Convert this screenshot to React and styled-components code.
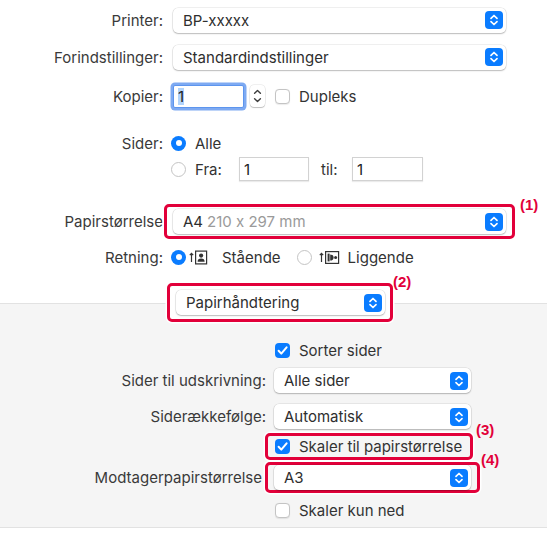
import styled, { createGlobalStyle } from "styled-components";

const GlobalStyle = createGlobalStyle`
  body {
    margin: 0;
    background: #ffffff;
    font-family: Inter, "Liberation Sans", sans-serif;
    font-size: 15px;
    font-feature-settings: "calt" 0;
    color: #333333;
  }
`;

const Page = styled.div`
  width: 547px;
`;

const TopSection = styled.section`
  padding: 6px 0 34px;
  background: #ffffff;
`;

const LowerSection = styled.section`
  background: #f5f5f5;
  border-top: 1px solid #e2e2e2;
  border-bottom: 1px solid #e2e2e2;
  padding-bottom: 7px;
`;

const FormRow = styled.div`
  display: grid;
  grid-template-columns: ${({ $col }) => $col}px 1fr;
  column-gap: ${({ $gap }) => $gap}px;
  align-items: center;
  height: ${({ $h }) => $h}px;
  margin-top: ${({ $mt }) => $mt || 0}px;
`;

const Label = styled.div`
  text-align: right;
  white-space: nowrap;
  color: #3a3a3a;
  padding-right: ${({ $pr }) => $pr || 0}px;
`;

const Controls = styled.div`
  display: flex;
  align-items: center;
`;

const Popup = styled.div`
  display: flex;
  align-items: center;
  justify-content: space-between;
  box-sizing: border-box;
  width: ${({ $w }) => $w}px;
  height: 25px;
  padding: 0 3px 0 10px;
  background: #ffffff;
  border-radius: 5px;
  box-shadow: 0 0 0 0.5px rgba(0, 0, 0, 0.12), 0 1px 1.5px rgba(0, 0, 0, 0.22);
  color: #2e2e2e;
  white-space: nowrap;
`;

const Dim = styled.span`
  color: #9a9a9a;
  margin-left: 4px;
`;

const ArrowBox = styled.span`
  display: flex;
  align-items: center;
  justify-content: center;
  width: 18px;
  height: 18px;
  border-radius: 4px;
  background: #0a7cff;
`;

const Callout = styled.div`
  position: relative;
  box-sizing: border-box;
  display: flex;
  align-items: center;
  width: ${({ $w }) => $w}px;
  height: ${({ $h }) => $h}px;
  margin-left: ${({ $ml }) => $ml}px;
  margin-top: ${({ $mt }) => $mt || 0}px;
  padding-left: ${({ $pl }) => $pl}px;
  border: 3px solid #e2003a;
  border-radius: 5px;
  background: ${({ $bg }) => $bg || "transparent"};
  box-shadow: 0 0 0 1.5px #ffffff;
`;

const CalloutTag = styled.span`
  position: absolute;
  left: calc(100% + ${({ $x }) => $x}px);
  top: ${({ $y }) => $y}px;
  font-family: "Liberation Sans", Arial, sans-serif;
  font-weight: 700;
  font-size: 15px;
  line-height: 16px;
  color: #e2003a;
  white-space: nowrap;
`;

const NumberField = styled.div`
  display: flex;
  align-items: center;
  box-sizing: border-box;
  width: ${({ $w }) => $w}px;
  height: ${({ $h }) => $h}px;
  padding-left: 4px;
  background: #ffffff;
  border: 1px solid ${({ $focus }) => ($focus ? "#5d95ee" : "#d2d2d2")};
  box-shadow: ${({ $focus }) =>
    $focus ? "0 0 0 2.5px #7eaaf2" : "0 1px 1px rgba(0, 0, 0, 0.08)"};
  border-radius: ${({ $focus }) => ($focus ? "2px" : "0")};
  color: #222222;
`;

const Selected = styled.span`
  background: #b2d4fb;
  line-height: 17px;
`;

const Stepper = styled.span`
  display: flex;
  margin-left: 6px;
  width: 15px;
  height: 22px;
  border-radius: 4px;
  background: #ffffff;
  box-shadow: 0 0 0 0.5px rgba(0, 0, 0, 0.12), 0 1px 1px rgba(0, 0, 0, 0.2);
`;

const Check = styled.span`
  display: flex;
  align-items: center;
  justify-content: center;
  box-sizing: border-box;
  flex-shrink: 0;
  width: 15px;
  height: 15px;
  margin-left: ${({ $ml }) => $ml || 0}px;
  border-radius: 4px;
  background: ${({ $on }) => ($on ? "#0a7cff" : "#ffffff")};
  border: ${({ $on }) => ($on ? "none" : "1px solid #c4c4c4")};
  box-shadow: ${({ $on }) => ($on ? "none" : "0 0.5px 1px rgba(0,0,0,0.08)")};
`;

const Radio = styled.span`
  display: flex;
  align-items: center;
  justify-content: center;
  box-sizing: border-box;
  flex-shrink: 0;
  width: 15px;
  height: 15px;
  margin-left: ${({ $ml }) => $ml || 0}px;
  border-radius: 50%;
  background: ${({ $on }) => ($on ? "#0a7cff" : "#ffffff")};
  border: ${({ $on }) => ($on ? "none" : "1px solid #c4c4c4")};

  &::after {
    content: "";
    display: ${({ $on }) => ($on ? "block" : "none")};
    width: 6px;
    height: 6px;
    border-radius: 50%;
    background: #ffffff;
  }
`;

const OptText = styled.span`
  margin-left: ${({ $ml }) => $ml}px;
  width: ${({ $w }) => ($w ? `${$w}px` : "auto")};
  white-space: nowrap;
  color: #333333;
`;

const Icon = styled.svg`
  margin-left: ${({ $ml }) => $ml}px;
  flex-shrink: 0;
`;

const HandlingWrap = styled.div`
  padding-left: 167px;
`;

const Arrows = () => (
  <ArrowBox>
    <svg width="18" height="18" viewBox="0 0 18 18">
      <path
        d="M6 7.3 L9 4.5 L12 7.3 M6 10.7 L9 13.5 L12 10.7"
        fill="none"
        stroke="#ffffff"
        strokeWidth="1.7"
        strokeLinecap="round"
        strokeLinejoin="round"
      />
    </svg>
  </ArrowBox>
);

const Select = ({ w, children }) => (
  <Popup $w={w}>
    <span>{children}</span>
    <Arrows />
  </Popup>
);

const Tick = () => (
  <svg width="15" height="15" viewBox="0 0 15 15">
    <path
      d="M3.6 7.8 L6.3 10.6 L11.6 4.3"
      fill="none"
      stroke="#ffffff"
      strokeWidth="2"
      strokeLinecap="round"
      strokeLinejoin="round"
    />
  </svg>
);

const PortraitIcon = () => (
  <Icon $ml={3} width="20" height="15" viewBox="0 0 20 15">
    <path d="M2.5 12 V3.5 M0.8 5.2 L2.5 3.3 L4.2 5.2" fill="none" stroke="#333" strokeWidth="1.2" />
    <rect x="6.6" y="1.1" width="11" height="12.8" fill="none" stroke="#333" strokeWidth="1.2" />
    <circle cx="12.1" cy="5.6" r="2.1" fill="#333" />
    <path d="M8.6 11.8 Q8.6 8.6 12.1 8.6 Q15.6 8.6 15.6 11.8 Z" fill="#333" />
  </Icon>
);

const LandscapeIcon = () => (
  <Icon $ml={7} width="21" height="15" viewBox="0 0 21 15">
    <path d="M2.5 12 V3.5 M0.8 5.2 L2.5 3.3 L4.2 5.2" fill="none" stroke="#333" strokeWidth="1.2" />
    <rect x="6.6" y="1.6" width="13" height="11.8" fill="none" stroke="#333" strokeWidth="1.2" />
    <rect x="8.6" y="3.6" width="2" height="7.8" fill="#333" />
    <path d="M11.2 4.4 Q14.6 4.4 14.6 7.5 Q14.6 10.6 11.2 10.6 Z" fill="#333" />
    <circle cx="16.6" cy="7.5" r="1.5" fill="#333" />
  </Icon>
);

const App = () => {
  return (
    <Page>
      <GlobalStyle />
      <TopSection>
        <FormRow $col={163} $gap={10} $h={28}>
          <Label>Printer:</Label>
          <Select w={333}>BP-xxxxx</Select>
        </FormRow>
        <FormRow $col={163} $gap={10} $h={28} $mt={9}>
          <Label>Forindstillinger:</Label>
          <Select w={333}>Standardindstillinger</Select>
        </FormRow>
        <FormRow $col={163} $gap={10} $h={32} $mt={9}>
          <Label>Kopier:</Label>
          <Controls>
            <NumberField $w={71} $h={23} $focus>
              <Selected>1</Selected>
            </NumberField>
            <Stepper>
              <svg width="15" height="22" viewBox="0 0 15 22">
                <path
                  d="M4.6 8.2 L7.5 5.4 L10.4 8.2 M4.6 13.8 L7.5 16.6 L10.4 13.8"
                  fill="none"
                  stroke="#3c3c3c"
                  strokeWidth="1.4"
                  strokeLinecap="round"
                  strokeLinejoin="round"
                />
              </svg>
            </Stepper>
            <Check $ml={10} />
            <OptText $ml={9}>Dupleks</OptText>
          </Controls>
        </FormRow>
        <FormRow $col={163} $gap={8} $h={24} $mt={19}>
          <Label>Sider:</Label>
          <Controls>
            <Radio $on />
            <OptText $ml={9}>Alle</OptText>
          </Controls>
        </FormRow>
        <FormRow $col={163} $gap={8} $h={26} $mt={1}>
          <div />
          <Controls>
            <Radio />
            <OptText $ml={9} $w={44}>
              Fra:
            </OptText>
            <NumberField $w={70} $h={24}>
              1
            </NumberField>
            <OptText $ml={12} $w={31}>
              til:
            </OptText>
            <NumberField $w={71} $h={24}>
              1
            </NumberField>
          </Controls>
        </FormRow>
        <FormRow $col={163} $gap={10} $h={35} $mt={22}>
          <Label>Papirstørrelse</Label>
          <Callout $w={351} $h={35} $ml={-9} $pl={6}>
            <Popup $w={333}>
              <span>
                A4<Dim>210 x 297 mm</Dim>
              </span>
              <Arrows />
            </Popup>
            <CalloutTag $x={8} $y={-10}>
              (1)
            </CalloutTag>
          </Callout>
        </FormRow>
        <FormRow $col={163} $gap={8} $h={24} $mt={6}>
          <Label>Retning:</Label>
          <Controls>
            <Radio $on />
            <PortraitIcon />
            <OptText $ml={13}>Stående</OptText>
            <Radio $ml={16} />
            <LandscapeIcon />
            <OptText $ml={8}>Liggende</OptText>
          </Controls>
        </FormRow>
      </TopSection>

      <LowerSection>
        <HandlingWrap>
          <Callout $w={226} $h={39} $ml={0} $mt={-21} $pl={6} $bg="#ffffff">
            <Select w={209}>Papirhåndtering</Select>
            <CalloutTag $x={3} $y={-12}>
              (2)
            </CalloutTag>
          </Callout>
        </HandlingWrap>
        <FormRow $col={266} $gap={8} $h={20} $mt={18}>
          <div />
          <Controls>
            <Check $on $ml={1}>
              <Tick />
            </Check>
            <OptText $ml={9}>Sorter sider</OptText>
          </Controls>
        </FormRow>
        <FormRow $col={266} $gap={8} $h={24} $mt={8}>
          <Label>Sider til udskrivning:</Label>
          <Select w={197}>Alle sider</Select>
        </FormRow>
        <FormRow $col={266} $gap={8} $h={24} $mt={12}>
          <Label>Siderækkefølge:</Label>
          <Select w={197}>Automatisk</Select>
        </FormRow>
        <FormRow $col={266} $gap={8} $h={27} $mt={5}>
          <div />
          <Callout $w={208} $h={27} $ml={-9} $pl={7}>
            <Check $on>
              <Tick />
            </Check>
            <OptText $ml={9}>Skaler til papirstørrelse</OptText>
            <CalloutTag $x={6} $y={-14}>
              (3)
            </CalloutTag>
          </Callout>
        </FormRow>
        <FormRow $col={266} $gap={8} $h={31} $mt={2}>
          <Label $pr={4}>Modtagerpapirstørrelse</Label>
          <Callout $w={215} $h={31} $ml={-9} $pl={6}>
            <Select w={197}>A3</Select>
            <CalloutTag $x={4} $y={-13}>
              (4)
            </CalloutTag>
          </Callout>
        </FormRow>
        <FormRow $col={266} $gap={8} $h={20} $mt={7}>
          <div />
          <Controls>
            <Check $ml={1} />
            <OptText $ml={9}>Skaler kun ned</OptText>
          </Controls>
        </FormRow>
      </LowerSection>
    </Page>
  );
};

export default App;
